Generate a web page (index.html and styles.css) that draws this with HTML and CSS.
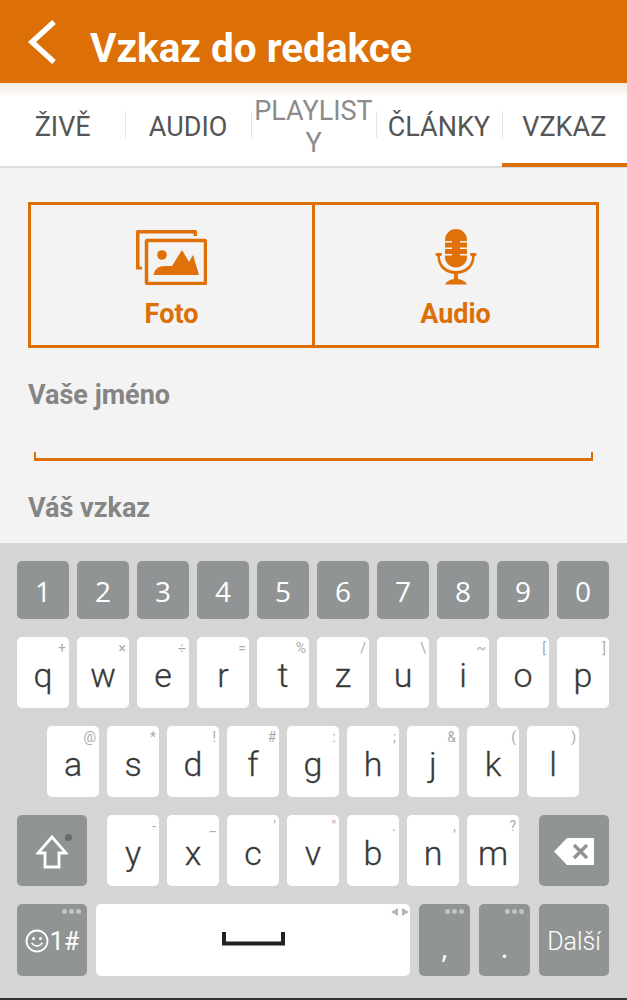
FILE: index.html
```html
<!DOCTYPE html>
<html lang="cs">
<head>
<meta charset="utf-8">
<title>Vzkaz do redakce</title>
<link rel="stylesheet" href="styles.css">
</head>
<body>
<div class="app">
  <header class="topbar">
    <svg class="back" width="30" height="46" viewBox="0 0 30 46"><path d="M27 3 L5 23 L27 43" fill="none" stroke="#fff" stroke-width="5.5"/></svg>
    <h1 class="title">Vzkaz do redakce</h1>
  </header>
  <nav class="tabs">
    <div class="tab">ŽIVĚ</div>
    <div class="tab tab-div">AUDIO</div>
    <div class="tab tab-div tab-muted">PLAYLISTY</div>
    <div class="tab tab-div">ČLÁNKY</div>
    <div class="tab tab-div tab-active">VZKAZ</div>
  </nav>
  <main class="content">
    <div class="media">
      <div class="media-btn">
        <svg class="media-icon icon-photo" width="72" height="56" viewBox="0 0 72 56">
          <path d="M1 40V2.500Q1 1 2.500 1H60.500Q62 1 62 2.500V7H58.500V4.500H4.500V37.500H7V40.500H2Q1 40.500 1 40Z" fill="#e07008"/>
          <rect x="11.500" y="11.500" width="59" height="43" rx="1" fill="none" stroke="#e07008" stroke-width="3.500"/>
          <circle cx="27" cy="26" r="4.800" fill="#e07008"/>
          <path d="M18.500 46Q20 37 30 37H37L47 21L54 33L58 26L64 46Z" fill="#e07008"/>
        </svg>
        <span class="media-label">Foto</span>
      </div>
      <div class="media-btn media-btn-right">
        <svg class="media-icon" width="42" height="56" viewBox="0 0 42 56">
          <path fill-rule="evenodd" d="M10 11A11 11 0 0 1 32 11V28A11 10.500 0 0 1 10 28ZM10 12V13.500H17V12ZM25 12V13.500H32V12ZM10 18.500V20H17V18.500ZM25 18.500V20H32V18.500ZM10 25V26.500H17V25ZM25 25V26.500H32V25Z" fill="#e07008"/>
          <path d="M0.500 25.500Q0.500 24 2 24H6Q7 24 7 25.500Q7 27 5 27V28C5 36 12 42 21 42C30 42 37 36 37 28V27Q35 27 35 25.500Q35 24 36 24H40Q41.500 24 41.500 25.500Q41.500 27 39.500 27.500V28C39.500 37 33 44 23 45V50Q30 51 32 55.500H10Q12 51 19 50V45C9 44 2.500 37 2.500 28V27.500Q0.500 27 0.500 25.500Z" fill="#e07008"/>
        </svg>
        <span class="media-label">Audio</span>
      </div>
    </div>
    <label class="field-label">Vaše jméno</label>
    <div class="input"></div>
    <label class="field-label field-label-second">Váš vzkaz</label>
  </main>
  <section class="keyboard">
    <div class="row row-num">
      <div class="key dark">1</div><div class="key dark">2</div><div class="key dark">3</div><div class="key dark">4</div><div class="key dark">5</div><div class="key dark">6</div><div class="key dark">7</div><div class="key dark">8</div><div class="key dark">9</div><div class="key dark">0</div>
    </div>
    <div class="row">
      <div class="key">q<span class="hint">+</span></div><div class="key">w<span class="hint">×</span></div><div class="key">e<span class="hint">÷</span></div><div class="key">r<span class="hint">=</span></div><div class="key">t<span class="hint">%</span></div><div class="key">z<span class="hint">/</span></div><div class="key">u<span class="hint">\</span></div><div class="key">i<span class="hint">~</span></div><div class="key">o<span class="hint">[</span></div><div class="key">p<span class="hint">]</span></div>
    </div>
    <div class="row row-home">
      <div class="key">a<span class="hint">@</span></div><div class="key">s<span class="hint">*</span></div><div class="key">d<span class="hint">!</span></div><div class="key">f<span class="hint">#</span></div><div class="key">g<span class="hint">:</span></div><div class="key">h<span class="hint">;</span></div><div class="key">j<span class="hint">&amp;</span></div><div class="key">k<span class="hint">(</span></div><div class="key">l<span class="hint">)</span></div>
    </div>
    <div class="row row-bottom">
      <div class="key dark wide">
        <svg width="32" height="34" viewBox="0 0 32 34"><path d="M16 2 L30 18 H23 V32 H9 V18 H2 Z" fill="none" stroke="#fff" stroke-width="2.800"/></svg>
        <span class="shift-dot"></span>
      </div>
      <div class="letters">
        <div class="key">y<span class="hint">-</span></div><div class="key">x<span class="hint">_</span></div><div class="key">c<span class="hint">'</span></div><div class="key">v<span class="hint">"</span></div><div class="key">b<span class="hint">.</span></div><div class="key">n<span class="hint">,</span></div><div class="key">m<span class="hint">?</span></div>
      </div>
      <div class="key dark wide">
        <svg width="40" height="27" viewBox="0 0 40 27"><path d="M40 0V27H13L0 13.500L13 0Z" fill="#fff"/><path d="M20 7L33 20M33 7L20 20" stroke="#919494" stroke-width="3.500" fill="none"/></svg>
      </div>
    </div>
    <div class="row row-last">
      <div class="key dark wide key-sym"><span class="dots"><i></i><i></i><i></i></span>
        <svg class="smile" width="24" height="24" viewBox="0 0 24 24"><circle cx="12" cy="12" r="10.500" fill="none" stroke="#fff" stroke-width="1.800"/><circle cx="8.500" cy="9.500" r="1.500" fill="#fff"/><circle cx="15.500" cy="9.500" r="1.500" fill="#fff"/><path d="M6.500 14Q12 20 17.500 14" fill="none" stroke="#fff" stroke-width="1.800"/></svg><span>1#</span>
      </div>
      <div class="key space">
        <svg class="space-glyph" width="63" height="14" viewBox="0 0 63 14"><path d="M2 0V11.500H61V0" fill="none" stroke="#222" stroke-width="4"/></svg>
        <svg class="space-arrows" width="18" height="8" viewBox="0 0 18 8"><path d="M7 0V8L0 4ZM11 0V8L18 4Z" fill="#b5b5b5"/></svg>
      </div>
      <div class="key dark key-punct"><span class="dots"><i></i><i></i><i></i></span>,</div>
      <div class="key dark key-punct"><span class="dots"><i></i><i></i><i></i></span>.</div>
      <div class="key dark wide key-next">Další</div>
    </div>
  </section>
  <div class="edge"></div>
</div>
</body>
</html>
```
FILE: styles.css
```css
* { box-sizing: border-box; }
html, body { margin: 0; padding: 0; }
body { width: 627px; height: 1000px; overflow: hidden; font-family: Roboto, sans-serif; background: #f3f3f3; }
.app { display: flex; flex-direction: column; height: 1000px; }

.topbar { height: 83px; background: #dc6f06; display: flex; align-items: center; padding: 0 0 0 27px; }
.back { flex: none; }
.title { margin: 14px 0 0 33px; color: #fff; font-size: 40.5px; font-weight: 700; line-height: 1; letter-spacing: 0; }

.tabs { height: 85px; display: grid; grid-template-columns: repeat(5, 1fr); background: linear-gradient(#f4e9df 0, #fff 14px); border-bottom: 2px solid #dcdcdc; }
.tab { min-width: 0; padding-top: 28px; text-align: center; color: #555; font-size: 27px; line-height: 32px; position: relative; }
.tab-div::before { content: ""; position: absolute; left: 0; top: 28px; height: 27px; width: 1px; background: #e4e4e4; }
.tab-muted { color: #8b8b8b; padding-top: 12px; padding-left: 2px; padding-right: 2px; overflow-wrap: anywhere; }
.tab-active { border-bottom: 4px solid #dc6f06; margin-bottom: -1px; }

.content { height: 375px; padding: 34px 28px 0; background: #f3f3f3; }
.media { display: flex; height: 146px; border: 3px solid #dc6f06; }
.media-btn { flex: 1 1 0; display: flex; flex-direction: column; align-items: center; padding-top: 24px; }
.media-btn-right { border-left: 3px solid #dc6f06; }
.media-icon { display: block; }
.icon-photo { margin-left: -2px; }
.media-label { margin-top: 13px; color: #dc6f06; font-size: 27px; font-weight: 700; line-height: 32px; }
.field-label { display: block; color: #858585; font-size: 27px; font-weight: 700; line-height: 32px; }
.media + .field-label { margin-top: 31px; }
.input { height: 9px; margin: 41px 6px 0; border: 2px solid #dc6f06; border-top: 0; border-bottom-width: 3px; }
.field-label-second { margin-top: 31px; }

.keyboard { flex: 1; background: #d5d5d5; padding: 18px 18px 0 17px; display: flex; flex-direction: column; gap: 18px; }
.row { display: flex; gap: 8px; height: 71px; }
.row-num { height: 58px; }
.row-home { padding-left: 30px; }
.row-bottom { gap: 20px; }
.row-last { height: 72px; gap: 9px; }
.letters { display: flex; gap: 8px; }
.key { flex: none; width: 52px; position: relative; display: flex; align-items: center; justify-content: center; background: #fff; border-radius: 5px; color: #383838; font-size: 34px; font-family: Roboto, sans-serif; font-weight: 300; -webkit-text-stroke: 0.3px #383838; padding-top: 4px; }
.key.dark { background: #919494; color: #fff; font-size: 28px; font-family: "Open Sans", sans-serif; font-weight: 400; -webkit-text-stroke: 0; padding-top: 2px; }
.key.wide { width: 70px; }
.hint { position: absolute; top: 3px; right: 3px; color: #ababab; font-size: 14px; line-height: 16px; font-weight: 400; -webkit-text-stroke: 0; font-family: Roboto, sans-serif; }
.row-bottom svg { display: block; }
.shift-dot { position: absolute; top: 19px; right: 15px; width: 7px; height: 7px; border-radius: 50%; background: #6a6a6a; }
.dots { position: absolute; top: 5px; right: 6px; display: flex; gap: 2px; }
.dots i { width: 5px; height: 5px; border-radius: 50%; background: #c4c4c4; }
.key.key-sym { gap: 1px; font-family: Roboto, sans-serif; font-weight: 400; font-size: 25px; padding-top: 2px; }
.smile { flex: none; }
.space { width: 314px; }
.space-glyph { margin-top: -6px; }
.space-arrows { position: absolute; top: 4px; right: 1px; }
.key.key-punct { width: 51px; font-size: 28px; padding-top: 14px; }
.key.key-next { font-family: Roboto, sans-serif; font-size: 25px; padding-top: 2px; font-weight: 300; }
.edge { height: 2px; background: #333; }
```
